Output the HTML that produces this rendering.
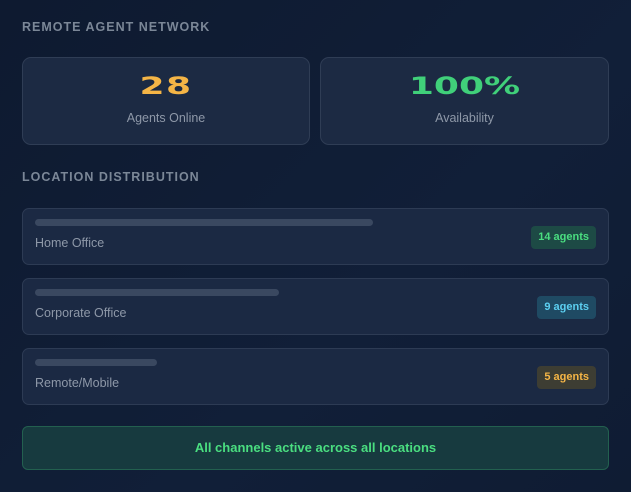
<!DOCTYPE html><html><head><style>
*{margin:0;padding:0;box-sizing:border-box}
body{width:631px;height:492px;background:linear-gradient(135deg,#0e1a30,#111f38 60%,#0f1c33);font-family:"Liberation Sans",sans-serif;position:relative;overflow:hidden}
.h{position:absolute;left:22px;font-size:12.5px;font-weight:bold;letter-spacing:1px;color:#7b8797}
.card{position:absolute;top:57px;height:88px;border:1px solid #2f3d55;border-radius:9px;background:#1c2a43;text-align:center}
.num{font-family:"DejaVu Sans",sans-serif;font-weight:bold;font-size:24px;margin-top:14px;transform:scaleX(1.5);line-height:28px}
.lbl{font-size:12.5px;color:#8e98a8;margin-top:11px}
.row{position:absolute;left:22px;width:587px;height:57px;border:1px solid #2d3b54;border-radius:7px;background:#1b2943}
.bar{position:absolute;left:12px;top:10px;height:7px;border-radius:4px;background:#3a4860}
.rl{position:absolute;left:12px;top:27px;font-size:12.5px;color:#8e98a8}
.b{position:absolute;right:12px;top:17px;height:23px;border-radius:4px;font-size:11px;font-weight:bold;line-height:23px;padding:0 7px}
.foot{position:absolute;left:22px;top:426px;width:587px;height:44px;border:1px solid #23604f;border-radius:6px;background:#173a3f;color:#4ade80;text-align:center;line-height:42px;font-size:13px;font-weight:bold}
</style></head><body>
<div class="h" style="top:20px">REMOTE AGENT NETWORK</div>
<div class="card" style="left:22px;width:288px"><div class="num" style="color:#f5b546;letter-spacing:1px">28</div><div class="lbl">Agents Online</div></div>
<div class="card" style="left:320px;width:289px"><div class="num" style="color:#40d07a">100%</div><div class="lbl">Availability</div></div>
<div class="h" style="top:170px">LOCATION DISTRIBUTION</div>
<div class="row" style="top:208px"><div class="bar" style="width:338px"></div><div class="rl">Home Office</div><div class="b" style="background:#1d4a45;color:#4ade80">14 agents</div></div>
<div class="row" style="top:278px"><div class="bar" style="width:244px"></div><div class="rl">Corporate Office</div><div class="b" style="background:#1f4a63;color:#5ccff0">9 agents</div></div>
<div class="row" style="top:348px"><div class="bar" style="width:122px"></div><div class="rl">Remote/Mobile</div><div class="b" style="background:#3d3d33;color:#f5b546">5 agents</div></div>
<div class="foot">All channels active across all locations</div>
</body></html>
